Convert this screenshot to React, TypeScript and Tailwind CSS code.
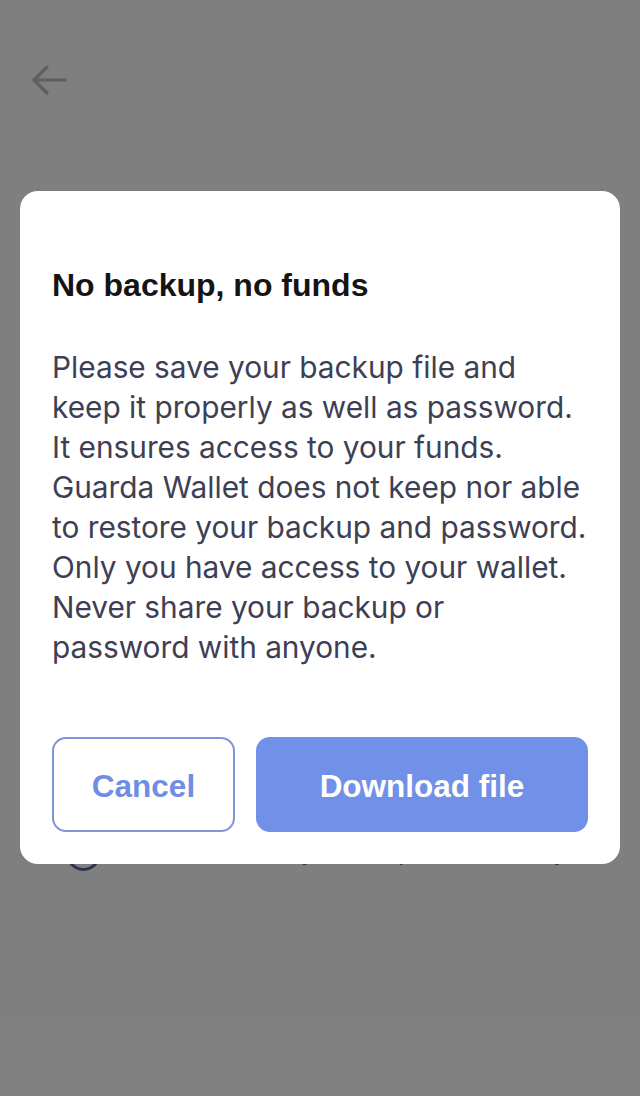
import React from 'react';

const bodyLines = [
  'Please save your backup file and',
  'keep it properly as well as password.',
  'It ensures access to your funds.',
  'Guarda Wallet does not keep nor able',
  'to restore your backup and password.',
  'Only you have access to your wallet.',
  'Never share your backup or',
  'password with anyone.',
];

const BackArrow = () => (
  <svg width="36" height="30" viewBox="0 0 36 30" fill="none" stroke="#bdbdbd" strokeWidth="3.2" strokeLinecap="round" strokeLinejoin="round">
    <path d="M33 15H3" />
    <path d="M15 2L2 15l13 13" />
  </svg>
);

export default function App() {
  return (
    <div className="relative h-[1096px] w-[640px] overflow-hidden bg-white" style={{ fontFamily: 'Inter, "Noto Sans", sans-serif' }}>
      {/* page behind the dialog */}
      <div className="flex flex-col">
        <div className="pl-[32px] pt-[65px]">
          <BackArrow />
        </div>
        <div className="mt-[741px] flex items-center gap-4 pl-[66px]">
          <div className="h-[35px] w-[35px] shrink-0 rounded-full border-[3px] border-[#56649e]" />
          <span className="-mt-[6px] whitespace-nowrap text-[26px] text-[#56649e]">I understand my backup is mine only</span>
        </div>
      </div>

      {/* overlay */}
      <div className="absolute inset-0 flex items-start justify-center bg-black/50 px-5 pt-[191px]">
        <div className="w-full rounded-[18px] bg-white px-8 pb-8 pt-[76px]">
          <h2
            className="text-[32px] font-bold leading-[36px] text-[#141414]"
            style={{ fontFamily: '"Liberation Sans", Arial, sans-serif' }}
          >
            No backup, no funds
          </h2>
          <div className="mt-[44px] text-[29.8px] leading-[40px] text-[#3d4054]">
            {bodyLines.map((line) => (
              <div key={line} className="whitespace-nowrap">
                {line}
              </div>
            ))}
          </div>
          <div
            className="mt-[70px] flex gap-[21px]"
            style={{ fontFamily: '"Liberation Sans", Arial, sans-serif' }}
          >
            <button className="h-[95px] w-[183px] rounded-[14px] border-2 border-[#7f95d6] bg-white pt-[4px] text-[31.5px] font-bold text-[#6f8de2]">
              Cancel
            </button>
            <button className="h-[95px] flex-1 rounded-[14px] bg-[#7190e8] pt-[4px] text-[31.5px] font-bold text-white">
              Download file
            </button>
          </div>
        </div>
      </div>
    </div>
  );
}
